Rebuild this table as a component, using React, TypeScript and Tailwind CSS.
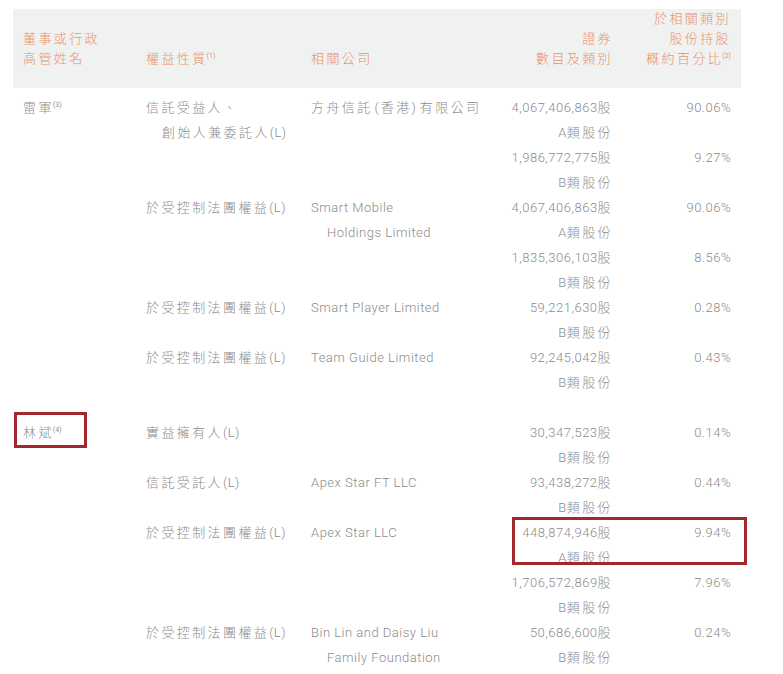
import React from 'react';

type Line = string | { text: string; indent?: boolean };

interface Row {
  name?: { text: string; sup: string; boxed?: boolean };
  nature?: Line[];
  company?: Line[];
  shares: [string, string];
  pct: string;
  boxed?: boolean;
}

const CJK = /([\u2E80-\u9FFF\u3000-\u303F\uFF00-\uFFEF]+)/;

// split CJK runs from latin runs so each gets its own letter spacing
function T({ s }: { s: string }) {
  return (
    <>
      {s.split(CJK).map((part, i) =>
        !part ? null : CJK.test(part) ? (
          <span key={i} className="tracking-[2.4px] font-light">{part}</span>
        ) : part === '(' || part === ')' ? (
          <span key={i} className={`font-light ${part === '(' ? 'ml-[2px] mr-[2px]' : 'mr-[4px]'}`}>{part}</span>
        ) : (
          <span key={i} className="tracking-[0.5px] font-light">{part}</span>
        )
      )}
    </>
  );
}

function Sup({ n }: { n: string }) {
  return <sup className="text-[7px] tracking-normal -ml-[1px] -top-[5px] relative align-baseline">({n})</sup>;
}

const control = '於受控制法團權益(L)';

const groupOne: Row[] = [
  {
    name: { text: '雷軍', sup: '3' },
    nature: ['信託受益人、', { text: '創始人兼委託人(L)', indent: true }],
    company: ['方舟信託(香港)有限公司'],
    shares: ['4,067,406,863股', 'A類股份'],
    pct: '90.06%',
  },
  { shares: ['1,986,772,775股', 'B類股份'], pct: '9.27%' },
  {
    nature: [control],
    company: ['Smart Mobile', { text: 'Holdings Limited', indent: true }],
    shares: ['4,067,406,863股', 'A類股份'],
    pct: '90.06%',
  },
  { shares: ['1,835,306,103股', 'B類股份'], pct: '8.56%' },
  { nature: [control], company: ['Smart Player Limited'], shares: ['59,221,630股', 'B類股份'], pct: '0.28%' },
  { nature: [control], company: ['Team Guide Limited'], shares: ['92,245,042股', 'B類股份'], pct: '0.43%' },
];

const groupTwo: Row[] = [
  {
    name: { text: '林斌', sup: '4', boxed: true },
    nature: ['實益擁有人(L)'],
    shares: ['30,347,523股', 'B類股份'],
    pct: '0.14%',
  },
  { nature: ['信託受託人(L)'], company: ['Apex Star FT LLC'], shares: ['93,438,272股', 'B類股份'], pct: '0.44%' },
  { nature: [control], company: ['Apex Star LLC'], shares: ['448,874,946股', 'A類股份'], pct: '9.94%', boxed: true },
  { shares: ['1,706,572,869股', 'B類股份'], pct: '7.96%' },
  {
    nature: [control],
    company: ['Bin Lin and Daisy Liu', { text: 'Family Foundation', indent: true }],
    shares: ['50,686,600股', 'B類股份'],
    pct: '0.24%',
  },
];

const cols = 'grid grid-cols-[123px_165px_179px_123px_118px] px-[10px]';

function Lines({ lines, right }: { lines?: Line[]; right?: boolean }) {
  return (
    <div className={right ? 'text-right' : ''}>
      {(lines || []).map((l, i) => {
        const item = typeof l === 'string' ? { text: l } : l;
        return (
          <div key={i} className={`h-[25px] leading-[25px] whitespace-nowrap ${item.indent ? 'pl-[16px]' : ''}`}>
            <T s={item.text} />
          </div>
        );
      })}
    </div>
  );
}

function BodyRow({ row }: { row: Row }) {
  return (
    <div className={`${cols} relative`}>
      <div className="relative">
        {row.name && (
          <div className="h-[25px] leading-[25px] whitespace-nowrap">
            <T s={row.name.text} />
            <Sup n={row.name.sup} />
          </div>
        )}
        {row.name?.boxed && (
          <div className="absolute -left-[9px] -top-[8px] w-[73px] h-[36px] border-[3px] border-[#a3282b]" />
        )}
      </div>
      <Lines lines={row.nature} />
      <Lines lines={row.company} />
      <Lines lines={row.shares} right />
      <Lines lines={[row.pct]} right />
      {row.boxed && (
        <div className="absolute left-[499px] -top-[3px] w-[235px] h-[48px] border-[3px] border-[#a3282b]" />
      )}
    </div>
  );
}

export default function App() {
  return (
    <div
      className="w-[783px] h-[674px] bg-white overflow-hidden text-[13px] text-[#8c8c8c]"
      style={{ fontFamily: "Roboto, 'Noto Sans CJK TC', sans-serif" }}
    >
      <div className={`${cols} ml-[13px] mt-[9px] w-[728px] bg-[#f0f1f1] pb-[19px] items-end text-[#e8916a]`}>
        <div className="leading-[20px]">
          <div><T s="董事或行政" /></div>
          <div><T s="高管姓名" /></div>
        </div>
        <div className="leading-[20px]">
          <T s="權益性質" />
          <Sup n="1" />
        </div>
        <div className="leading-[20px]">
          <T s="相關公司" />
        </div>
        <div className="leading-[20px] text-right">
          <div><T s="證券" /></div>
          <div><T s="數目及類別" /></div>
        </div>
        <div className="leading-[20px] text-right">
          <div><T s="於相關類別" /></div>
          <div><T s="股份持股" /></div>
          <div>
            <T s="概約百分比" />
            <Sup n="2" />
          </div>
        </div>
      </div>

      <div className="ml-[13px] w-[728px] mt-[7px]">
        {groupOne.map((r, i) => (
          <BodyRow key={i} row={r} />
        ))}
        <div className="h-[25px]" />
        {groupTwo.map((r, i) => (
          <BodyRow key={i} row={r} />
        ))}
      </div>
    </div>
  );
}
